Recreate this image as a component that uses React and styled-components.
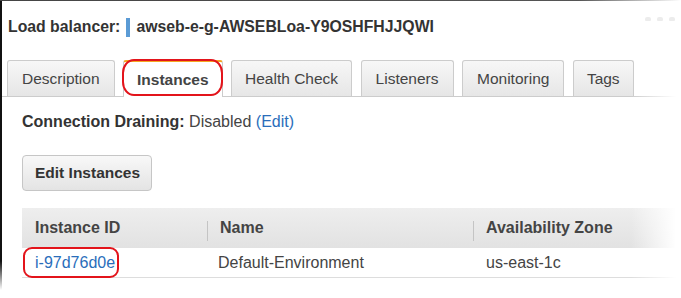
import React from "react"
import styled, { createGlobalStyle } from "styled-components"

const GlobalStyle = createGlobalStyle`
  html, body {
    margin: 0;
    padding: 0;
    background: #ffffff;
  }
  body {
    font-family: "Liberation Sans", Arial, sans-serif;
    color: #333333;
  }
`

const Shot = styled.div`
  position: relative;
  width: 681px;
  height: 298px;
  overflow: hidden;
  background: #ffffff;
  box-sizing: border-box;
  font-size: 16px;

  /* cut edges of the captured window */
  &::before {
    content: "";
    position: absolute;
    left: 0;
    top: 0;
    width: 2px;
    height: 290px;
    background: linear-gradient(to bottom, #111 0%, #111 90%, rgba(17, 17, 17, 0) 100%);
  }
  &::after {
    content: "";
    position: absolute;
    left: 0;
    top: 0;
    right: 0;
    height: 1px;
    background: linear-gradient(to right, #444 0%, #555 85%, rgba(90, 90, 90, 0) 100%);
  }
`

const RightFade = styled.div`
  position: absolute;
  top: 90px;
  right: 0;
  width: 50px;
  height: 200px;
  background: linear-gradient(to right, rgba(255, 255, 255, 0), #ffffff 90%);
  pointer-events: none;
`

const WindowDots = styled.div`
  position: absolute;
  top: 17px;
  right: 6px;
  display: flex;
  gap: 6px;
  span {
    width: 6px;
    height: 4px;
    border-radius: 2px 2px 1px 1px;
    background: #ececec;
  }
`

const Title = styled.div`
  display: flex;
  align-items: center;
  height: 22px;
  margin: 16px 0 0 8px;
  font-size: 15.8px;
  font-weight: bold;
  color: #333;
  line-height: 20px;
`

const Marker = styled.span`
  width: 4px;
  height: 19px;
  margin: 0 6px;
  background: #5b9bd5;
`

const TabBar = styled.div`
  display: flex;
  gap: 8.5px;
  margin-top: 22px;
  padding-left: 7px;
  height: 36px;
  border-bottom: 1px solid #cccccc;
  font-size: 15.5px;
`

const Tab = styled.div`
  box-sizing: border-box;
  height: ${({ $active }) => ($active ? "37px" : "36px")};
  padding: 0 ${({ $pad }) => $pad || 14}px;
  display: flex;
  align-items: center;
  border: 1px solid #cccccc;
  border-bottom: none;
  border-top: ${({ $active }) => ($active ? "2px solid #f5a623" : "1px solid #cccccc")};
  border-radius: 3px 3px 0 0;
  background: ${({ $active }) =>
    $active ? "#ffffff" : "linear-gradient(to bottom, #f7f7f7, #e6e6e6)"};
  font-weight: ${({ $active }) => ($active ? "bold" : "normal")};
  color: #444;
  z-index: 1;
`

const Body = styled.div`
  display: flex;
  flex-direction: column;
  align-items: flex-start;
  padding: 0 0 0 22px;
`

const Line = styled.div`
  margin-top: 15px;
  line-height: 20px;
  color: #444;
  b {
    color: #333;
  }
`

const Link = styled.span`
  color: #2a6ebb;
`

const Button = styled.div`
  display: flex;
  align-items: center;
  box-sizing: border-box;
  margin-top: 23px;
  height: 36px;
  padding: 0 11px 0 12px;
  border: 1px solid #c6c6c6;
  border-radius: 4px;
  background: linear-gradient(to bottom, #f8f8f8, #e4e4e4);
  font-size: 15.5px;
  font-weight: bold;
  color: #333;
`

const Table = styled.div`
  align-self: stretch;
  margin-top: 17px;
  display: grid;
  grid-template-columns: 185px 266px 1fr;
`

const HeadCell = styled.div`
  height: 40px;
  display: flex;
  align-items: center;
  padding-left: 13px;
  background: linear-gradient(to bottom, #eeeeee, #e2e2e2);
  font-weight: bold;
  color: #444;
  position: relative;
  ${({ $sep }) =>
    $sep &&
    `
    &::before {
      content: "";
      position: absolute;
      left: 0;
      top: 13px;
      height: 20px;
      width: 1px;
      background: #c4c4c4;
    }
  `}
`

const Cell = styled.div`
  height: 29px;
  display: flex;
  align-items: center;
  padding-left: ${({ $pad }) => $pad || 13}px;
  border-bottom: 1px solid #dddddd;
  color: ${({ $link }) => ($link ? "#2a6ebb" : "#444")};
`

const Ring = styled.div`
  position: absolute;
  box-sizing: border-box;
  border: 2.5px solid #e3141b;
  pointer-events: none;
  z-index: 5;
`

export default function App() {
  return (
    <>
      <GlobalStyle />
      <Shot>
        <WindowDots>
          <span />
          <span />
          <span />
        </WindowDots>
        <Title>
          Load balancer:
          <Marker />
          awseb-e-g-AWSEBLoa-Y9OSHFHJJQWI
        </Title>
        <TabBar>
          <Tab>Description</Tab>
          <Tab $active $pad={13}>Instances</Tab>
          <Tab $pad={13}>Health Check</Tab>
          <Tab>Listeners</Tab>
          <Tab>Monitoring</Tab>
          <Tab $pad={13}>Tags</Tab>
        </TabBar>
        <Body>
          <Line>
            <b>Connection Draining:</b> Disabled <Link>(Edit)</Link>
          </Line>
          <Button>Edit Instances</Button>
          <Table>
            <HeadCell>Instance ID</HeadCell>
            <HeadCell $sep>Name</HeadCell>
            <HeadCell $sep>Availability Zone</HeadCell>
            <Cell $link>i-97d76d0e</Cell>
            <Cell $pad={11}>Default-Environment</Cell>
            <Cell>us-east-1c</Cell>
          </Table>
        </Body>
        <RightFade />
        <Ring
          style={{ left: 122, top: 59, width: 101, height: 37, borderRadius: "12px / 14px" }}
        />
        <Ring style={{ left: 23, top: 247, width: 96, height: 31, borderRadius: 9 }} />
      </Shot>
    </>
  )
}
